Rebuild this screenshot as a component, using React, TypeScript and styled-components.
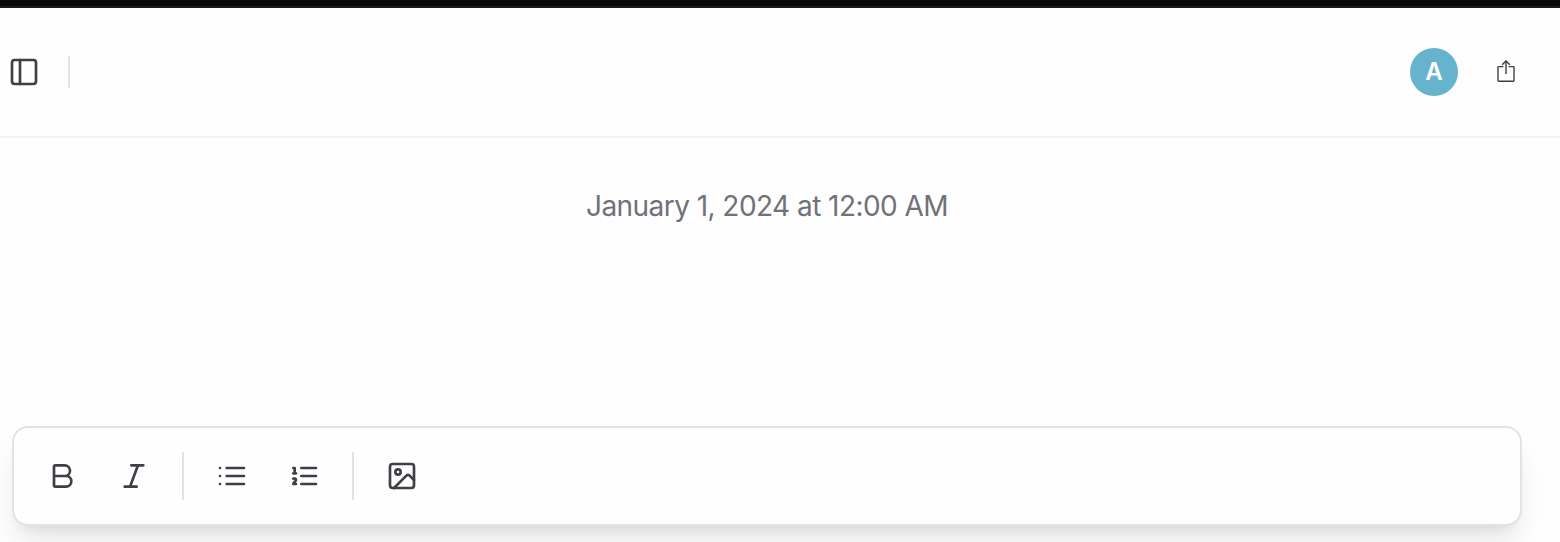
import React from "react";
import styled, { createGlobalStyle } from "styled-components";

const GlobalStyle = createGlobalStyle`
  * { box-sizing: border-box; }
  body {
    margin: 0;
    background: #fefefe;
    color: #3f3f46;
    font-family: Inter, "Liberation Sans", sans-serif;
    -webkit-font-smoothing: antialiased;
    overflow: hidden;
  }
`;

const Page = styled.div`
  display: flex;
  flex-direction: column;
  height: 542px;
  overflow: hidden;
`;

const TopBar = styled.div`
  flex: none;
  height: 8px;
  background: #0a0a0a;
  border-bottom: 2px solid #1c1b1d;
`;

const Header = styled.header`
  flex: none;
  height: 130px;
  display: flex;
  align-items: center;
  justify-content: space-between;
  padding: 0 42px 0 8px;
  border-bottom: 2px solid #f3f3f4;
`;

const Group = styled.div<{ $gap: number }>`
  display: flex;
  align-items: center;
  gap: ${({ $gap }) => $gap}px;
`;

const IconButton = styled.button<{ $size: number }>`
  display: flex;
  align-items: center;
  justify-content: center;
  width: ${({ $size }) => $size}px;
  height: ${({ $size }) => $size}px;
  padding: 0;
  border: 0;
  background: none;
  color: inherit;
`;

const Divider = styled.span<{ $height: number; $margin?: string }>`
  width: 2px;
  height: ${({ $height }) => $height}px;
  margin: ${({ $margin }) => $margin ?? "0"};
  background: #e3e3e4;
`;

const Avatar = styled.div`
  display: flex;
  align-items: center;
  justify-content: center;
  width: 48px;
  height: 48px;
  border-radius: 50%;
  background: #66b3ce;
  color: #fff;
  font-size: 24px;
  font-weight: 600;
  line-height: 32px;
`;

const Main = styled.main`
  flex: 1;
  display: flex;
  flex-direction: column;
  justify-content: space-between;
  padding: 48px 38px 16px 12px;
`;

const DateLabel = styled.time`
  align-self: center;
  color: #71717a;
  font-size: 28px;
  letter-spacing: -0.55px;
  line-height: 40px;
  white-space: nowrap;
`;

const Toolbar = styled.div`
  display: flex;
  align-items: center;
  height: 100px;
  padding: 0 12px;
  border: 2px solid #e3e3e4;
  border-radius: 16px;
  background: #fefefe;
  box-shadow: 0 20px 30px -6px rgba(0, 0, 0, 0.1), 0 8px 12px -8px rgba(0, 0, 0, 0.1);
`;

const StrokeIcon = styled.svg.attrs({ viewBox: "0 0 24 24", width: 32, height: 32 })`
  display: block;
  fill: none;
  stroke: currentColor;
  stroke-width: 2;
  stroke-linecap: round;
  stroke-linejoin: round;
`;

const ShareIcon = styled.svg.attrs({ viewBox: "0 0 24 24", width: 24, height: 24 })`
  display: block;
  fill: none;
  stroke: currentColor;
  stroke-width: 1.4;
`;

export default function App() {
  return (
    <Page>
      <GlobalStyle />
      <TopBar />
      <Header>
        <Group $gap={28}>
          <IconButton $size={32} aria-label="Toggle sidebar">
            <StrokeIcon>
              <rect width="18" height="18" x="3" y="3" rx="2" />
              <path d="M9 3v18" />
            </StrokeIcon>
          </IconButton>
          <Divider $height={32} />
        </Group>
        <Group $gap={36}>
          <Avatar>A</Avatar>
          <IconButton $size={24} aria-label="Share">
            <ShareIcon>
              <path d="M9.4 6.6H4.7a.7.7 0 0 0-.7.7v13.3a.7.7 0 0 0 .7.7h14.6a.7.7 0 0 0 .7-.7V7.3a.7.7 0 0 0-.7-.7h-4.7" />
              <path d="M12 1v13M8.2 4.7 12 .9l3.8 3.8" />
            </ShareIcon>
          </IconButton>
        </Group>
      </Header>
      <Main>
        <DateLabel>January 1, 2024 at 12:00 AM</DateLabel>
        <Toolbar>
          <IconButton $size={72} aria-label="Bold">
            <StrokeIcon>
              <path d="M6 12h9a4 4 0 0 1 0 8H7a1 1 0 0 1-1-1V5a1 1 0 0 1 1-1h7a4 4 0 0 1 0 8" />
            </StrokeIcon>
          </IconButton>
          <IconButton $size={72} aria-label="Italic">
            <StrokeIcon>
              <path d="M19 4h-9M14 20H5M15 4 9 20" />
            </StrokeIcon>
          </IconButton>
          <Divider $height={48} $margin="0 12px" />
          <IconButton $size={72} aria-label="Bulleted list">
            <StrokeIcon>
              <path d="M3 12h.01M3 18h.01M3 6h.01M8 12h13M8 18h13M8 6h13" />
            </StrokeIcon>
          </IconButton>
          <IconButton $size={72} aria-label="Numbered list">
            <StrokeIcon>
              <path d="M10 12h11M10 18h11M10 6h11M4 10h2M4 6h1v4M6 18H4c0-1 2-2 2-3s-1-1.5-2-1" />
            </StrokeIcon>
          </IconButton>
          <Divider $height={48} $margin="0 12px" />
          <IconButton $size={72} aria-label="Insert image">
            <StrokeIcon>
              <rect width="18" height="18" x="3" y="3" rx="2" />
              <circle cx="9" cy="9" r="2" />
              <path d="m21 15-3.086-3.086a2 2 0 0 0-2.828 0L6 21" />
            </StrokeIcon>
          </IconButton>
        </Toolbar>
      </Main>
    </Page>
  );
}
